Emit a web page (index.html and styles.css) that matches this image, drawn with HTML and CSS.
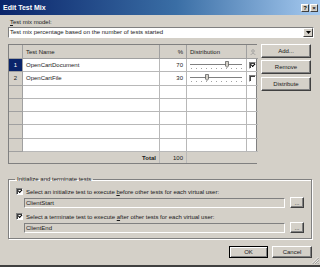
FILE: index.html
```html
<!DOCTYPE html>
<html>
<head>
<meta charset="utf-8">
<link rel="stylesheet" href="styles.css">
</head>
<body>
<div class="dialog">
  <div class="titlebar">
    <span class="title">Edit Test Mix</span>
    <span class="tbtns"><span class="tbtn">?</span><span class="tbtn">×</span></span>
  </div>
  <div class="content">
    <div class="lbl"><u>T</u>est mix model:</div>
    <div class="combo">
      <span class="combo-text">Test mix percentage based on the number of tests started</span>
      <span class="combo-btn"><svg width="5" height="3" viewBox="0 0 5 3"><path d="M0 0H5L2.5 3Z" fill="#000"/></svg></span>
    </div>
    <div class="main">
      <div class="grid">
        <div class="c hdr rn"></div>
        <div class="c hdr name">Test Name</div>
        <div class="c hdr pct">%</div>
        <div class="c hdr dist">Distribution</div>
        <div class="c hdr chk"><svg width="6" height="6" viewBox="0 0 6 6"><circle cx="3" cy="2" r="1.3" fill="none" stroke="#9a9a9a" stroke-width="0.8"/><path d="M1 6C1 4 5 4 5 6" fill="none" stroke="#9a9a9a" stroke-width="0.8"/></svg></div>

        <div class="c rn sel">1</div>
        <div class="c name">OpenCartDocument</div>
        <div class="c pct">70</div>
        <div class="c dist"><svg class="slider" width="54" height="9" viewBox="0 0 54 9"><path d="M0 3.5H52" stroke="#808080" stroke-width="1"/><path d="M0 4.5H52" stroke="#fff" stroke-width="0.6"/><g fill="#707070"><rect x="1" y="7" width="0.8" height="0.8"/><rect x="6" y="7" width="0.8" height="0.8"/><rect x="11" y="7" width="0.8" height="0.8"/><rect x="16" y="7" width="0.8" height="0.8"/><rect x="21" y="7" width="0.8" height="0.8"/><rect x="26" y="7" width="0.8" height="0.8"/><rect x="31" y="7" width="0.8" height="0.8"/><rect x="36" y="7" width="0.8" height="0.8"/><rect x="41" y="7" width="0.8" height="0.8"/><rect x="46" y="7" width="0.8" height="0.8"/><rect x="51" y="7" width="0.8" height="0.8"/></g><path d="M35.5 0.5H38.5V5L37 6.5L35.5 5Z" fill="#d4d0c8" stroke="#505050" stroke-width="0.7"/></svg></div>
        <div class="c chk"><span class="cb on"></span></div>

        <div class="c rn">2</div>
        <div class="c name">OpenCartFile</div>
        <div class="c pct">30</div>
        <div class="c dist"><svg class="slider" width="54" height="9" viewBox="0 0 54 9"><path d="M0 3.5H52" stroke="#808080" stroke-width="1"/><path d="M0 4.5H52" stroke="#fff" stroke-width="0.6"/><g fill="#707070"><rect x="1" y="7" width="0.8" height="0.8"/><rect x="6" y="7" width="0.8" height="0.8"/><rect x="11" y="7" width="0.8" height="0.8"/><rect x="16" y="7" width="0.8" height="0.8"/><rect x="21" y="7" width="0.8" height="0.8"/><rect x="26" y="7" width="0.8" height="0.8"/><rect x="31" y="7" width="0.8" height="0.8"/><rect x="36" y="7" width="0.8" height="0.8"/><rect x="41" y="7" width="0.8" height="0.8"/><rect x="46" y="7" width="0.8" height="0.8"/><rect x="51" y="7" width="0.8" height="0.8"/></g><path d="M15.5 0.5H18.5V5L17 6.5L15.5 5Z" fill="#d4d0c8" stroke="#505050" stroke-width="0.7"/></svg></div>
        <div class="c chk"><span class="cb"></span></div>

        <div class="c rn"></div><div class="c name"></div><div class="c pct"></div><div class="c dist"></div><div class="c chk"></div>
        <div class="c rn"></div><div class="c name"></div><div class="c pct"></div><div class="c dist"></div><div class="c chk"></div>
        <div class="c rn"></div><div class="c name"></div><div class="c pct"></div><div class="c dist"></div><div class="c chk"></div>
        <div class="c rn"></div><div class="c name"></div><div class="c pct"></div><div class="c dist"></div><div class="c chk"></div>
        <div class="c rn"></div><div class="c name"></div><div class="c pct"></div><div class="c dist"></div><div class="c chk"></div>

        <div class="c tot tlabel">Total</div>
        <div class="c tot pct">100</div>
        <div class="c tot trest"></div>
      </div>
      <div class="side">
        <div class="btn">Add...</div>
        <div class="btn">Remove</div>
        <div class="btn">Distribute</div>
      </div>
    </div>
    <fieldset class="group">
      <legend>Initialize and terminate tests</legend>
      <div class="opt first"><span class="cb on"></span><span>Select an initialize test to execute <u>b</u>efore other tests for each virtual user:</span></div>
      <div class="pick"><div class="tbox">ClientStart</div><div class="btn dots">...</div></div>
      <div class="opt"><span class="cb on"></span><span>Select a terminate test to execute <u>a</u>fter other tests for each virtual user:</span></div>
      <div class="pick"><div class="tbox">ClientEnd</div><div class="btn dots">...</div></div>
    </fieldset>
    <div class="footer">
      <div class="btn ok">OK</div>
      <div class="btn cancel">Cancel</div>
    </div>
  </div>
  <div class="grip"><svg width="8" height="8" viewBox="0 0 8 8"><path d="M7.5 1L1 7.5M7.5 3.5L3.5 7.5M7.5 6L6 7.5" stroke="#fff" stroke-width="0.7"/><path d="M8 1.7L1.7 8M8 4.2L4.2 8M8 6.7L6.7 8" stroke="#808080" stroke-width="0.7"/></svg></div>
</div>
</body>
</html>
```
FILE: styles.css
```css
* { box-sizing: border-box; }
html, body { margin: 0; padding: 0; }
body {
  width: 320px; height: 267px; overflow: hidden;
  font-family: "Liberation Sans", Arial, sans-serif;
  font-size: 6px; color: #1a1a1a;
}
.dialog {
  position: relative;
  width: 320px; height: 267px;
  background: #d4d0c8;
  border-bottom: 2px solid #404040;
  display: flex; flex-direction: column;
}
.titlebar {
  height: 15px;
  background: linear-gradient(to right, #0a246a, #3a6ea5 55%, #a6caf0);
  display: flex; align-items: center; justify-content: space-between;
  padding: 0 2px 0 3px;
}
.title { color: #fff; font-weight: bold; font-size: 7px; }
.tbtns { display: flex; gap: 1px; }
.tbtn {
  width: 8px; height: 8px; background: #d4d0c8; color: #000;
  border: 1px solid; border-color: #fff #404040 #404040 #fff;
  font-size: 6px; font-weight: bold; line-height: 6px; text-align: center;
}
.content { padding: 3px 6px 0 8px; display: flex; flex-direction: column; flex: 1; }
.lbl { height: 9px; line-height: 9px; padding-left: 2px; }
.combo {
  height: 11px; background: #fff;
  border: 1px solid; border-color: #808080 #fff #fff #808080;
  display: flex; align-items: center; justify-content: space-between;
}
.combo-text { padding-left: 1px; line-height: 9px; }
.combo-btn {
  width: 10px; height: 9px; background: #d4d0c8;
  border: 1px solid; border-color: #fff #404040 #404040 #fff;
  display: flex; align-items: center; justify-content: center;
}
.main { display: flex; margin-top: 6px; gap: 4px; }
.grid {
  width: 249px; height: 120px;
  display: grid;
  grid-template-columns: 14px 137px 27px 60px 11px;
  grid-template-rows: 14px repeat(7, 13.3px) 1fr;
  border: 1px solid #808080;
  background: #fff;
}
.c {
  border-right: 1px solid #b8b8b8; border-bottom: 1px solid #b8b8b8;
  display: flex; align-items: center; overflow: hidden; white-space: nowrap;
}
.c.chk { border-right: none; justify-content: center; }
.hdr { background: #d4d0c8; border-color: #a0a0a0; }
.hdr.name { padding-left: 3px; }
.hdr.dist { padding-left: 3px; }
.rn { background: #d4d0c8; justify-content: center; border-color: #a0a0a0; }
.rn.sel { background: #0a246a; color: #fff; }
.name { padding-left: 3px; }
.pct { justify-content: flex-end; padding-right: 3px; }
.dist { padding-left: 3px; }
.cb {
  display: inline-block; width: 7px; height: 7px; background: #fff;
  border: 1px solid; border-color: #808080 #fff #fff #808080;
  box-shadow: inset 1px 1px 0 #404040;
  position: relative; flex-shrink: 0;
}
.cb.on::after {
  content: ""; position: absolute; left: 1px; top: 0px;
  width: 3px; height: 2px;
  border-left: 1px solid #000; border-bottom: 1px solid #000;
  transform: rotate(-45deg);
}
.tot { background: #d4d0c8; border-bottom: none; }
.tlabel { grid-column: 1 / 3; justify-content: flex-end; padding-right: 3px; font-weight: bold; }
.trest { grid-column: 4 / 6; border-right: none; }
.side { width: 50px; display: flex; flex-direction: column; gap: 2px; }
.btn {
  height: 14px; background: #d4d0c8;
  border: 1px solid; border-color: #fff #404040 #404040 #fff;
  box-shadow: inset -1px -1px 0 #808080;
  display: flex; align-items: center; justify-content: center;
}
.side .btn:last-child { margin-top: 1px; }
.group {
  margin: 11px 2px 0 0; padding: 0 7px 0 7px;
  border: 1px solid #808080; box-shadow: 1px 1px 0 #fff, inset 1px 1px 0 #fff;
  min-width: 0; height: 64px;
}
.group legend { padding: 0 2px; margin-left: -1px; line-height: 8px; }
.opt { display: flex; align-items: center; gap: 3px; height: 9px; margin-top: 4px; }
.opt.first { margin-top: 4px; }
.pick { display: flex; align-items: center; gap: 5px; margin: 1px 0 0 8px; }
.tbox {
  width: 262px; height: 10px; line-height: 8px; padding-left: 1px;
  background: #d4d0c8;
  border: 1px solid; border-color: #808080 #fff #fff #808080;
}
.btn.dots { width: 14px; height: 11px; }
.footer { display: flex; justify-content: flex-end; gap: 4px; margin-top: 7px; padding-right: 2px; }
.footer .btn { height: 12px; }
.btn.ok { width: 39px; border: 1px solid #000; box-shadow: inset 1px 1px 0 #fff, inset -1px -1px 0 #808080; }
.btn.cancel { width: 40px; }
.grip { position: absolute; right: 1px; bottom: 1px; width: 8px; height: 8px; }
.grip svg { display: block; }
```
